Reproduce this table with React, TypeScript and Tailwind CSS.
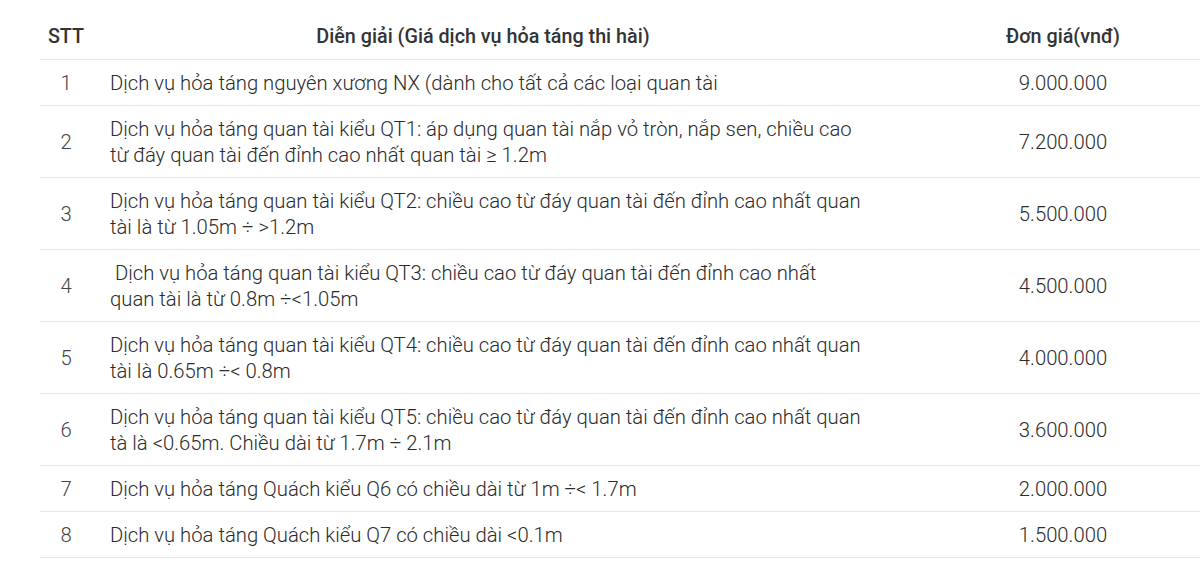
import React from 'react';

const rows: { stt: number; lines: string[]; price: string }[] = [
  { stt: 1, lines: ['Dịch vụ hỏa táng nguyên xương NX (dành cho tất cả các loại quan tài'], price: '9.000.000' },
  {
    stt: 2,
    lines: [
      'Dịch vụ hỏa táng quan tài kiểu QT1: áp dụng quan tài nắp vỏ tròn, nắp sen, chiều cao',
      'từ đáy quan tài đến đỉnh cao nhất quan tài ≥ 1.2m',
    ],
    price: '7.200.000',
  },
  {
    stt: 3,
    lines: [
      'Dịch vụ hỏa táng quan tài kiểu QT2: chiều cao từ đáy quan tài đến đỉnh cao nhất quan',
      'tài là từ 1.05m ÷ >1.2m',
    ],
    price: '5.500.000',
  },
  {
    stt: 4,
    lines: ['\u00a0Dịch vụ hỏa táng quan tài kiểu QT3: chiều cao từ đáy quan tài đến đỉnh cao nhất', 'quan tài là từ 0.8m ÷<1.05m'],
    price: '4.500.000',
  },
  {
    stt: 5,
    lines: ['Dịch vụ hỏa táng quan tài kiểu QT4: chiều cao từ đáy quan tài đến đỉnh cao nhất quan', 'tài là 0.65m ÷< 0.8m'],
    price: '4.000.000',
  },
  {
    stt: 6,
    lines: [
      'Dịch vụ hỏa táng quan tài kiểu QT5: chiều cao từ đáy quan tài đến đỉnh cao nhất quan',
      'tà là <0.65m. Chiều dài từ 1.7m ÷ 2.1m',
    ],
    price: '3.600.000',
  },
  { stt: 7, lines: ['Dịch vụ hỏa táng Quách kiểu Q6 có chiều dài từ 1m ÷< 1.7m'], price: '2.000.000' },
  { stt: 8, lines: ['Dịch vụ hỏa táng Quách kiểu Q7 có chiều dài <0.1m'], price: '1.500.000' },
];

export default function App() {
  return (
    <div className="w-[1200px] h-[586px] overflow-hidden bg-white pt-[14px] pl-[40px] font-['Roboto','Liberation_Sans',sans-serif] text-[#2b2b2b]">
      {/* Header */}
      <div className="flex h-[46px] items-center border-b border-[#e6e6e6] text-[19.75px] font-medium text-[#333]">
        <div className="w-[52px] text-center">STT</div>
        <div className="w-[782px] text-center">Diễn giải (Giá dịch vụ hỏa táng thi hài)</div>
        <div className="flex-1 pl-[52px] text-center">Đơn giá(vnđ)</div>
      </div>

      {/* Rows */}
      {rows.map((r) => (
        <div key={r.stt} className="flex items-center border-b border-[#e6e6e6] pt-[10px] pb-[9px] text-[20.25px] leading-[26px] font-light">
          <div className="w-[52px] text-center text-[#444]">{r.stt}</div>
          <div className="w-[782px] pl-[18px] whitespace-pre">
            {r.lines.map((l, i) => (
              <div key={i}>{l}</div>
            ))}
          </div>
          <div className="flex-1 pl-[52px] text-center">{r.price}</div>
        </div>
      ))}
    </div>
  );
}
